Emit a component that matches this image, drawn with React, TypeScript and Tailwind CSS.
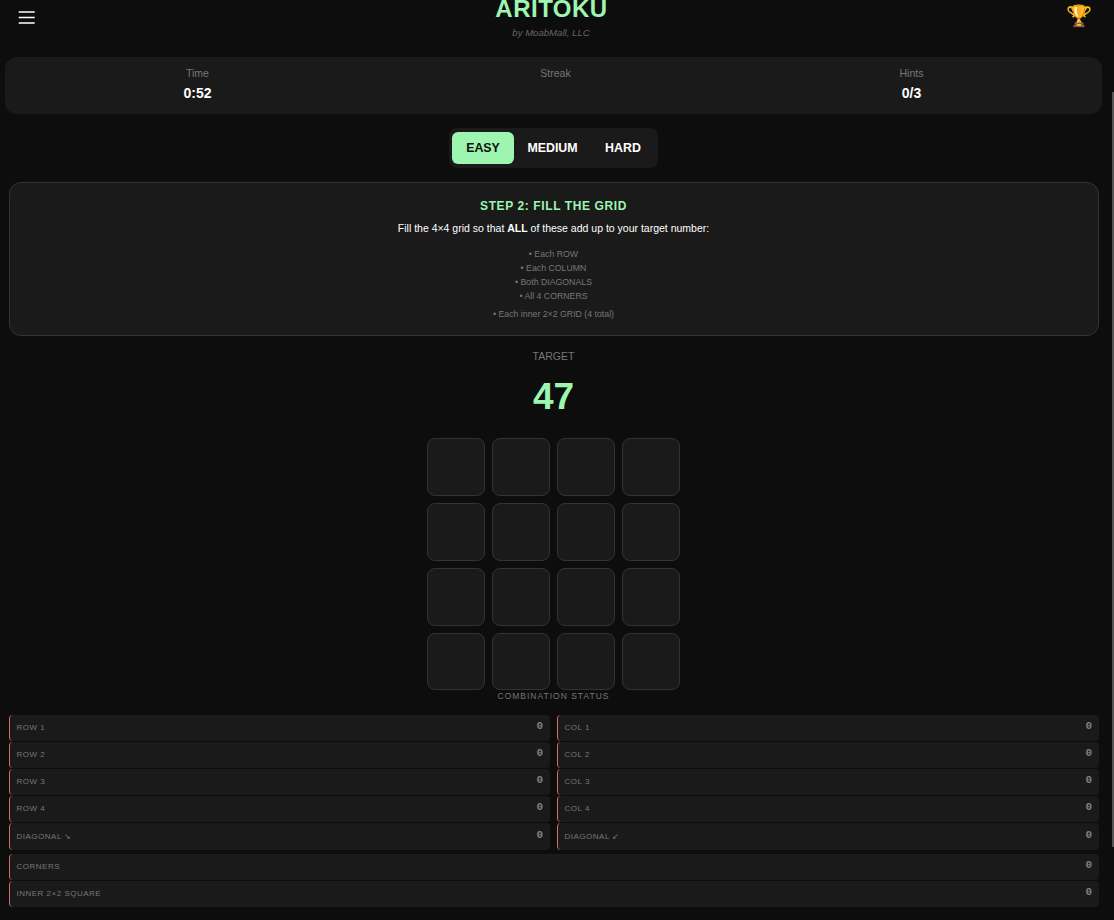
const font = { fontFamily: '"Liberation Sans", Arial, sans-serif' };

function Row({ label, tall = false }: { label: string; tall?: boolean }) {
  return (
    <div className={`flex justify-between items-start rounded-[4px] border-l border-[#d66b6b] bg-[#1a1a1a] pl-[6.5px] pr-[7px] ${tall ? "h-[27px]" : "h-[26px]"}`}>
      <span className={`text-[8px] leading-[9px] tracking-[0.5px] text-[#777] ${tall ? "mt-[9px]" : "mt-[8px]"}`}>{label}</span>
      <span className={`text-[11px] font-bold leading-[12px] text-[#808080] font-['Liberation_Mono',monospace] ${tall ? "mt-[6px]" : "mt-[5px]"}`}>0</span>
    </div>
  );
}

export default function App() {
  const left = ["ROW 1", "ROW 2", "ROW 3", "ROW 4"];
  const right = ["COL 1", "COL 2", "COL 3", "COL 4"];
  return (
    <div style={font} className="relative h-[920px] w-[1114px] overflow-hidden bg-[#0d0d0d]">
      <div className="absolute right-0 top-[92px] h-[755px] w-[2px] bg-[#555]" />

      <header className="relative flex h-[57px] items-start justify-between pl-[18px] pr-[22px]">
        <svg className="mt-[11px]" width="17" height="14" viewBox="0 0 17 14" fill="none" stroke="#fff" strokeWidth="1.6">
          <path d="M0.7 1H16.7M0.7 6.5H16.7M0.7 12H16.7" />
        </svg>
        <div className="absolute left-0 right-[11px] top-[-7px] text-center">
          <div className="text-[24px] font-bold leading-[32px] tracking-[0.5px] text-[#9ef5b0]">ARITOKU</div>
          <div className="mt-[2px] pr-[1px] text-[9.6px] italic leading-[12px] text-[#666]">by MoabMall, LLC</div>
        </div>
        <div className="mt-[3px] text-[21px] leading-[26px] text-[#e8a317]">🏆</div>
      </header>

      <section className="ml-[5px] grid h-[57px] w-[1097px] grid-cols-3 rounded-[12px] bg-[#1a1a1a] pl-[14px] pr-[12px] pt-[10px] text-center">
        <div>
          <div className="text-[10.5px] leading-[13px] text-[#777]">Time</div>
          <div className="mt-[5px] text-[14px] font-bold leading-[16px] text-white">0:52</div>
        </div>
        <div className="pl-[2px] text-[10.5px] leading-[13px] text-[#777]">Streak</div>
        <div>
          <div className="text-[10.5px] leading-[13px] text-[#777]">Hints</div>
          <div className="mt-[5px] text-[14px] font-bold leading-[16px] text-white">0/3</div>
        </div>
      </section>

      <div className="mt-[14px] flex justify-center pr-[7px]">
        <div className="flex h-[40px] items-center rounded-[8px] bg-[#1a1a1a] px-[3px] text-[12.4px] font-bold">
          <button className="h-[32px] w-[62px] rounded-[6px] bg-[#9ef5b0] text-[#0d0d0d]">EASY</button>
          <button className="h-[32px] w-[77px] text-white">MEDIUM</button>
          <button className="h-[32px] w-[64px] text-white">HARD</button>
        </div>
      </div>

      <section className="ml-[9px] mt-[14px] h-[154px] w-[1090px] rounded-[12px] border border-[#333] bg-[#1a1a1a] pt-[15px] text-center">
        <h2 className="pr-[1px] text-[12px] font-bold leading-[16px] tracking-[0.6px] text-[#9ef5b0]">STEP 2: FILL THE GRID</h2>
        <p className="mt-[7px] pr-[1px] text-[10.5px] leading-[14px] text-white">
          Fill the 4×4 grid so that <b>ALL</b> of these add up to your target number:
        </p>
        <div className="mt-[12px] pr-[1px] text-[8.75px] leading-[14px] text-[#777]">
          <div>• Each ROW</div>
          <div>• Each COLUMN</div>
          <div>• Both DIAGONALS</div>
          <div>• All 4 CORNERS</div>
          <div className="mt-[4px]">• Each inner 2×2 GRID (4 total)</div>
        </div>
      </section>

      <div className="mt-[14px] pr-[7px] text-center">
        <div className="text-[10.5px] leading-[13px] text-[#777]">TARGET</div>
        <div className="mt-[12px] text-[37px] font-bold leading-[44px] text-[#9ef5b0]">47</div>
      </div>

      <div className="ml-[427px] mt-[19px] grid w-[253px] grid-cols-4 gap-[7px]">
        {Array.from({ length: 16 }).map((_, i) => (
          <div key={i} className={`w-[58px] rounded-[8px] border border-[#333] bg-[#1a1a1a] ${i > 11 ? "h-[57px]" : "h-[58px]"}`} />
        ))}
      </div>

      <div className="mt-[1px] pr-[7px] text-center text-[8.5px] leading-[10px] tracking-[1px] text-[#777]">COMBINATION STATUS</div>

      <div className="ml-[9px] mt-[14px] grid w-[1090px] grid-cols-[541px_542px] gap-x-[7px]">
        <div className="flex flex-col gap-[1px]">
          {left.map((l) => (
            <Row key={l} label={l} />
          ))}
          <Row label="DIAGONAL ↘" tall />
        </div>
        <div className="flex flex-col gap-[1px]">
          {right.map((l) => (
            <Row key={l} label={l} />
          ))}
          <Row label="DIAGONAL ↙" tall />
        </div>
      </div>
      <div className="ml-[9px] mt-[4px] flex w-[1090px] flex-col gap-[1px]">
        <Row label="CORNERS" />
        <Row label="INNER 2×2 SQUARE" />
      </div>
    </div>
  );
}
